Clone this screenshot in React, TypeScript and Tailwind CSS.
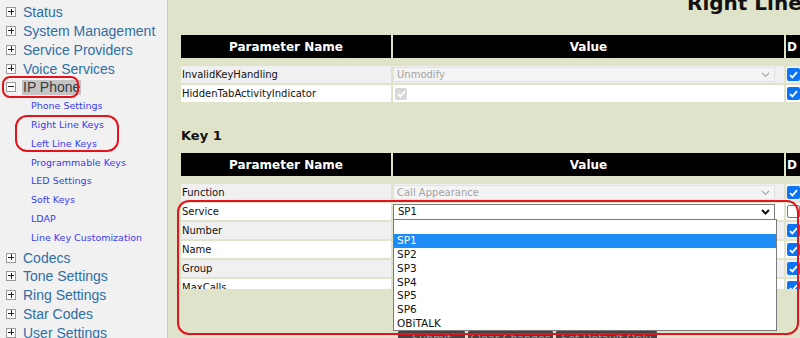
import React from "react";

const NAV_TOP = ["Status", "System Management", "Service Providers", "Voice Services"];
const SUB = [
  "Phone Settings",
  "Right Line Keys",
  "Left Line Keys",
  "Programmable Keys",
  "LED Settings",
  "Soft Keys",
  "LDAP",
  "Line Key Customization",
];
const NAV_BOTTOM = ["Codecs", "Tone Settings", "Ring Settings", "Star Codes", "User Settings"];

function Box({ minus }: { minus?: boolean }) {
  return (
    <div className="relative ml-[6px] h-[10px] w-[10px] shrink-0 border border-[#9a9a9a] bg-white">
      <div className="absolute left-[1px] top-[3px] h-[1px] w-[6px] bg-[#222]" />
      {!minus && <div className="absolute left-[3.5px] top-[0.5px] h-[6px] w-[1px] bg-[#222]" />}
    </div>
  );
}

function NavItem({ label }: { label: string }) {
  return (
    <div className="flex h-[18.75px] items-center">
      <Box />
      <span className="ml-[7px] whitespace-nowrap text-[14px] leading-none text-[#2f6ea5]">{label}</span>
    </div>
  );
}

function Check({ disabled }: { disabled?: boolean }) {
  return (
    <div
      className={
        disabled
          ? "flex h-[12px] w-[12px] items-center justify-center rounded-[2px] bg-[#d8d8d8]"
          : "flex h-[13px] w-[13px] items-center justify-center rounded-[2px] bg-[#0b74f5]"
      }
    >
      <svg width="9" height="8" viewBox="0 0 9 8">
        <polyline points="1,4.2 3.4,6.4 8,1.2" fill="none" stroke="#ffffff" strokeWidth="1.8" />
      </svg>
    </div>
  );
}

function Unchecked() {
  return <div className="h-[13px] w-[13px] rounded-[2px] border border-[#767676] bg-white" />;
}

function Chevron({ dark }: { dark?: boolean }) {
  return (
    <svg width="9" height="6" viewBox="0 0 9 6" className="shrink-0">
      <polyline
        points="1,1 4.5,4.5 8,1"
        fill="none"
        stroke={dark ? "#111111" : "#a8a8a8"}
        strokeWidth={dark ? 2 : 1.2}
      />
    </svg>
  );
}

function DisabledSelect({ text }: { text: string }) {
  return (
    <div className="flex h-[15px] w-[382px] items-center justify-between border border-[#e2e2e2] bg-[#f4f4f4] pl-[3px] pr-[4px]">
      <span className="text-[10px] leading-none text-[#a3a3a3]">{text}</span>
      <Chevron />
    </div>
  );
}

function Header() {
  return (
    <div className="flex h-[23px] gap-[2px] text-[12px] font-bold text-white">
      <div className="flex w-[210px] items-center justify-center bg-black">Parameter Name</div>
      <div className="flex w-[391px] items-center justify-center bg-black">Value</div>
      <div className="flex w-[40px] items-center bg-black pl-[1px]">D</div>
    </div>
  );
}

function Row({
  gray,
  name,
  value,
  check,
}: {
  gray?: boolean;
  name: string;
  value?: React.ReactNode;
  check?: React.ReactNode;
}) {
  const bg = gray ? "bg-[#f0f0f0]" : "bg-white";
  return (
    <div className="flex h-[17px] gap-[2px] text-[10px] text-[#111]">
      <div className={`flex w-[210px] items-center pl-[1px] ${bg}`}>{name}</div>
      <div className={`flex w-[391px] items-center ${bg}`}>{value}</div>
      <div className={`flex w-[40px] items-center pl-[1px] ${bg}`}>{check ?? <Check />}</div>
    </div>
  );
}

export default function App() {
  return (
    <div
      className="relative flex h-[338px] w-[800px] overflow-hidden"
      style={{ fontFamily: '"DejaVu Sans", Verdana, sans-serif' }}
    >
      {/* Sidebar */}
      <aside className="w-[168px] shrink-0 border-r border-[#c9ccb6] bg-[#f1f1f1] pt-[3px]">
        {NAV_TOP.map((l) => (
          <div key={l} style={{ fontFamily: '"Liberation Sans", Arial, sans-serif' }}>
            <NavItem label={l} />
          </div>
        ))}
        <div className="flex h-[18.75px] items-center" style={{ fontFamily: '"Liberation Sans", Arial, sans-serif' }}>
          <Box minus />
          <span className="ml-[6px] flex h-[15px] items-center bg-[#c4c4c4] pl-[1px] pr-[1px] text-[14px] leading-none text-[#3a3a3a]">
            IP Phone
          </span>
        </div>
        {SUB.map((l) => (
          <div key={l} className="flex h-[18.75px] items-center pl-[31px]">
            <span className="whitespace-nowrap text-[9.5px] leading-none text-[#3b3bf2]">{l}</span>
          </div>
        ))}
        <div className="mt-[1.5px]">
          {NAV_BOTTOM.map((l) => (
            <div key={l} style={{ fontFamily: '"Liberation Sans", Arial, sans-serif' }}>
              <NavItem label={l} />
            </div>
          ))}
        </div>
      </aside>

      {/* Main */}
      <main className="min-w-0 flex-1 overflow-hidden bg-[#dfe3c9] pl-[13px]">
        <div className="w-[660px]">
          <div className="mt-[-7px] h-[20px] whitespace-nowrap pl-[506px] text-[20px] font-bold leading-[20px] text-[#111]">
            Right Line Keys
          </div>

          <div className="mt-[22px]">
            <Header />
          </div>
          <div className="mt-[8px] flex flex-col gap-[2px]">
            <Row gray name="InvalidKeyHandling" value={<DisabledSelect text="Unmodify" />} />
            <Row
              name="HiddenTabActivityIndicator"
              value={
                <div className="pl-[2px]">
                  <Check disabled />
                </div>
              }
            />
          </div>

          <div className="mt-[26px] h-[16px] text-[13px] font-bold leading-[16px] text-[#111]">Key 1</div>

          <div className="mt-[9px] h-[136px] overflow-hidden">
            <Header />
            <div className="mt-[8px] flex flex-col gap-[2px]">
              <Row gray name="Function" value={<DisabledSelect text="Call Appearance" />} />
              <Row
                name="Service"
                value={
                  <div className="flex h-[16px] w-[382px] items-center justify-between border border-[#7a7a7a] bg-white pl-[4px] pr-[4px]">
                    <span className="text-[10px] leading-none text-[#111]">SP1</span>
                    <Chevron dark />
                  </div>
                }
                check={<Unchecked />}
              />
              <Row gray name="Number" />
              <Row name="Name" />
              <Row gray name="Group" />
              <Row name="MaxCalls" />
            </div>
          </div>

          <div className="ml-[217px] mt-[41px] flex gap-[3px] text-[11px] text-[#9a9a9a]">
            <div className="flex h-[22px] w-[67px] items-start justify-center rounded-[3px] bg-[#454545] pt-[1px]">Submit</div>
            <div className="flex h-[22px] w-[85px] items-start justify-center rounded-[3px] bg-[#454545] pt-[1px]">Clear Changes</div>
            <div className="flex h-[22px] w-[101px] items-start justify-center rounded-[3px] bg-[#454545] pt-[1px]">Set Default Only</div>
          </div>
        </div>
      </main>

      {/* Open dropdown list */}
      <div className="absolute left-[393px] top-[219px] h-[112px] w-[384px] border border-[#7a7a7a] bg-white text-[10.5px] text-[#111]">
        {["", "SP1", "SP2", "SP3", "SP4", "SP5", "SP6", "OBiTALK"].map((o, i) => (
          <div
            key={i}
            className={
              i === 1
                ? "flex h-[13.75px] items-center bg-[#1e8cf5] pl-[3px] leading-none text-white"
                : "flex h-[13.75px] items-center pl-[3px] leading-none"
            }
          >
            {o}
          </div>
        ))}
      </div>

      {/* Red annotation rings */}
      <div className="pointer-events-none absolute left-[2px] top-[76px] h-[22px] w-[77px] rounded-[8px] border-2 border-[#e3141b]" />
      <div className="pointer-events-none absolute left-[15px] top-[115px] h-[37px] w-[104px] rounded-[12px] border-2 border-[#e3141b]" />
      <div className="pointer-events-none absolute left-[177px] top-[200px] h-[135px] w-[622px] rounded-[12px] border-2 border-[#e3141b]" />
    </div>
  );
}
